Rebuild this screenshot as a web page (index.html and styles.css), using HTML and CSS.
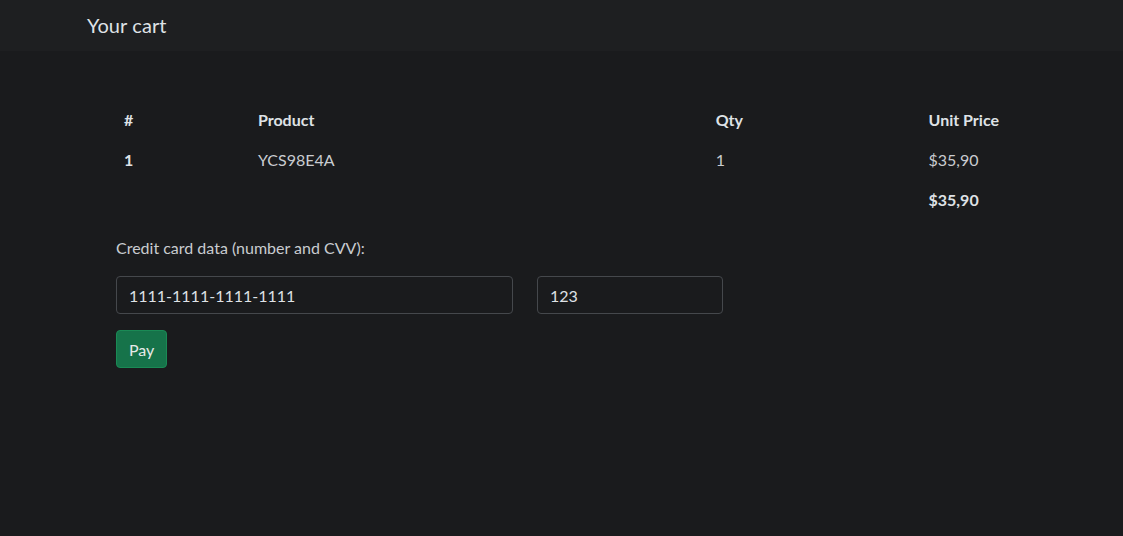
FILE: index.html
```html
<!DOCTYPE html>
<html lang="en">
<head>
<meta charset="utf-8">
<title>Your cart</title>
<link rel="stylesheet" href="styles.css">
</head>
<body>
<header class="topbar">
  <div class="brand">Your cart</div>
</header>
<main class="content">
  <table class="cart">
    <thead>
      <tr><th class="c-num">#</th><th class="c-prod">Product</th><th class="c-qty">Qty</th><th class="c-price">Unit Price</th></tr>
    </thead>
    <tbody>
      <tr><th>1</th><td>YCS98E4A</td><td>1</td><td>$35,90</td></tr>
      <tr><td></td><td></td><td></td><th>$35,90</th></tr>
    </tbody>
  </table>
  <form class="payform">
    <label class="label">Credit card data (number and CVV):</label>
    <div class="fields">
      <input class="field field-card" type="text" value="1111-1111-1111-1111">
      <input class="field field-cvv" type="text" value="123">
    </div>
    <button class="btn-pay" type="button">Pay</button>
  </form>
</main>
</body>
</html>
```
FILE: styles.css
```css
* { box-sizing: border-box; }
html, body { margin: 0; padding: 0; }
body {
  background: #1a1b1d;
  color: #c9ccd0;
  font-family: "Lato", "Noto Sans", sans-serif;
  font-size: 16px;
  height: 536px;
  overflow: hidden;
}
.topbar {
  height: 51px;
  background: #1e1f21;
  display: flex;
  align-items: center;
  padding: 0 0 2px 87px;
}
.brand {
  font-size: 20px;
  letter-spacing: 0.1px;
  color: #dfe2e6;
}
.content {
  padding: 48px 0 0 116px;
}
.cart {
  border-collapse: collapse;
  width: 891px;
}
.cart th, .cart td {
  text-align: left;
  padding: 0 8px;
  height: 40px;
  vertical-align: middle;
  white-space: nowrap;
}
.cart th { font-weight: 700; color: #dfe2e6; }
.c-num { width: 134px; }
.c-prod { width: 458px; }
.c-qty { width: 213px; }
.payform {
  padding-top: 17px;
}
.label {
  display: block;
  line-height: 24px;
  margin-bottom: 16px;
}
.fields {
  display: flex;
  gap: 24px;
  margin-bottom: 16px;
}
.field {
  height: 38px;
  background: #1a1b1d;
  border: 1px solid #45484c;
  border-radius: 4px;
  color: #dfe2e6;
  font: inherit;
  padding: 0 12px;
  outline: none;
}
.field-card { width: 397px; }
.field-cvv { width: 186px; }
.btn-pay {
  height: 38px;
  padding: 0 12px;
  background: #16734a;
  border: 1px solid #1a8a55;
  border-radius: 4px;
  color: #e6eae8;
  font: inherit;
}
```
